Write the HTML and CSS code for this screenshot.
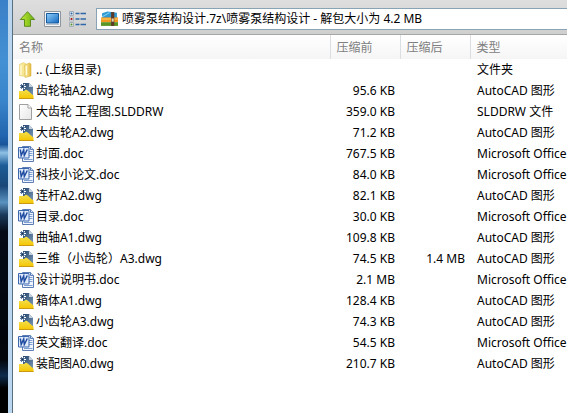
FILE: index.html
```html
<!DOCTYPE html>
<html lang="zh-Hans">
<head>
  <meta charset="UTF-8">
  <title>喷雾泵结构设计.7z</title>
  <link rel="stylesheet" href="styles.css">
</head>
<body>
  <svg class="sprites" aria-hidden="true">
    <defs>
      <linearGradient id="gFolder"><stop offset="0" stop-color="#fdf3b0"/><stop offset="1" stop-color="#e3b93c"/></linearGradient>
      <linearGradient id="gYellow" x2="0" y2="1"><stop offset="0" stop-color="#f2e04c"/><stop offset="1" stop-color="#f6c400"/></linearGradient>
      <linearGradient id="gNavy" x2="1" y2="1"><stop offset="0" stop-color="#24466e"/><stop offset="1" stop-color="#7f9cb8"/></linearGradient>
      <linearGradient id="gPage" x2="1" y2="1"><stop offset="0" stop-color="#fff"/><stop offset="1" stop-color="#e6e6e6"/></linearGradient>
      <linearGradient id="gGreen"><stop offset="0" stop-color="#c4e838"/><stop offset="1" stop-color="#66b010"/></linearGradient>
      <linearGradient id="gScreen" x2="1" y2="1"><stop offset="0" stop-color="#8fd0fa"/><stop offset="1" stop-color="#1467c0"/></linearGradient>
    </defs>
    <symbol id="folder" viewBox="0 0 16 16">
      <path d="M1.500 2.500l4-2 2 1v13l-6-1z" fill="#f7e793" stroke="#e2cd6a" stroke-width=".6"/>
      <path d="M6.500 3l5-2 1.500 1v12l-6 1.500z" fill="url(#gFolder)" stroke="#d9b445" stroke-width=".6"/>
      <path d="M3 3v10M8.500 4v9" stroke="#fffbe0" stroke-width="1.200"/>
    </symbol>
    <symbol id="dwg" viewBox="0 0 16 16">
      <path d="M5 0h6l4 4v10H5z" fill="url(#gNavy)"/>
      <path d="M11 0l4 4h-4z" fill="#c4d2e0"/>
      <path d="M1 8h5l2-1.500c3 1 4.500 4.500 7.500 6V16H1z" fill="url(#gYellow)"/>
      <path d="M1 15.500h14.500" stroke="#c99a10"/>
      <path d="M2 1h5v5H2z" fill="#5c7ea6"/>
      <path d="M3.500 2.500h2v2h-2z" fill="#16304f"/>
      <path d="M4 0h1v2H4zM4 5h1v2H4zM1 3h2v1H1zM6 3h2v1H6zM2 1h1v1H2zM6 1h1v1H6zM2 5h1v1H2zM6 5h1v1H6z" fill="#fff"/>
    </symbol>
    <symbol id="page" viewBox="0 0 16 16">
      <path d="M1.500 .5h8.500l3.500 3.500v11.500h-12z" fill="url(#gPage)" stroke="#a0a0a0"/>
      <path d="M10 .5v3.500h3.500" fill="#fff" stroke="#a0a0a0"/>
    </symbol>
    <symbol id="doc" viewBox="0 0 16 16">
      <path d="M4.500 .5h8l3 3v12h-11z" fill="#f0f5fd" stroke="#5b7db4"/>
      <path d="M12.500 .5v3h3" fill="#cfdef4" stroke="#5b7db4"/>
      <path d="M11 5.500h3.500M11 7.500h3.500M11 9.500h3.500M6 13.500h8.500" stroke="#7f9fd2"/>
      <path d="M.5 1.500h10.500v10.500H.5z" fill="#dfeafb" stroke="#3e68ae"/>
      <path d="M2.300 3.500l.9 6L5.700 4l.6 5.500L9.300 3.500" fill="none" stroke="#1f4ba0" stroke-width="1.500"/>
    </symbol>
    <symbol id="up" viewBox="0 0 16 16">
      <path d="M8 .7l7.200 7.800H11v6.800H5V8.500H.8z" fill="url(#gGreen)" stroke="#5c8c1c"/>
    </symbol>
    <symbol id="screen" viewBox="0 0 17 16">
      <path d="M.5 .5h16v15H.5z" fill="#f4f4f4" stroke="#8d969f"/>
      <path d="M2.500 2.500h12v9.500h-12z" fill="url(#gScreen)" stroke="#165a9e"/>
      <path d="M2 13.500h13" stroke="#b9c2ca"/>
    </symbol>
    <symbol id="list" viewBox="0 0 17 16">
      <path d="M.5 .5h4v4h-4zM.5 6h4v4h-4zM.5 11.500h4v4h-4z" fill="#fff" stroke="#a2adb8"/>
      <path d="M1.500 1.500h2v2h-2z" fill="#2d66a8"/>
      <path d="M1.500 7h2v2h-2z" fill="#a02020"/>
      <path d="M1.500 12.500h2v2h-2z" fill="#4f8c28"/>
      <path d="M6.500 2.500h4M11.500 2.500h5.500M6.500 8h4M11.500 8h5.500M6.500 13.500h4M11.500 13.500h5.500" stroke="#2f69ac" stroke-width="1.600"/>
    </symbol>
    <symbol id="archive" viewBox="0 0 16 14">
      <path d="M1 1.500L6 0l9 1v6H1z" fill="#2f9ad2"/>
      <path d="M1 5l7-4" stroke="#8fd4f0"/>
      <path d="M0 5.500h16V10H0z" fill="#f19a20"/>
      <path d="M0 7h16" stroke="#ffcb62"/>
      <path d="M0 10h16v3.500H0z" fill="#5a9624"/>
      <path d="M9.500 .5h3v13h-3z" fill="#5b3b28"/>
      <path d="M10 6.500h2v3h-2z" fill="#e4d8b2"/>
    </symbol>
  </svg>

  <div class="desktop"></div>
  <div class="window">
    <div class="toolbar">
      <button type="button" aria-label="向上"><svg><use href="#up"/></svg></button>
      <button type="button" aria-label="查看"><svg><use href="#screen"/></svg></button>
      <button type="button" aria-label="列表"><svg><use href="#list"/></svg></button>
      <label class="address">
        <svg><use href="#archive"/></svg>
        <input type="text" aria-label="路径" value="喷雾泵结构设计.7z\喷雾泵结构设计 - 解包大小为 4.2 MB">
      </label>
    </div>
    <table>
      <colgroup><col class="col-name"><col class="col-size"><col class="col-size"><col></colgroup>
      <thead>
        <tr><th>名称</th><th>压缩前</th><th>压缩后</th><th>类型</th></tr>
      </thead>
      <tbody>
        <tr><td><svg><use href="#folder"/></svg>.. (上级目录)</td><td></td><td></td><td>文件夹</td></tr>
        <tr><td><svg><use href="#dwg"/></svg>齿轮轴A2.dwg</td><td>95.6 KB</td><td></td><td>AutoCAD 图形</td></tr>
        <tr><td><svg><use href="#page"/></svg>大齿轮 工程图.SLDDRW</td><td>359.0 KB</td><td></td><td>SLDDRW 文件</td></tr>
        <tr><td><svg><use href="#dwg"/></svg>大齿轮A2.dwg</td><td>71.2 KB</td><td></td><td>AutoCAD 图形</td></tr>
        <tr><td><svg><use href="#doc"/></svg>封面.doc</td><td>767.5 KB</td><td></td><td>Microsoft Office</td></tr>
        <tr><td><svg><use href="#doc"/></svg>科技小论文.doc</td><td>84.0 KB</td><td></td><td>Microsoft Office</td></tr>
        <tr><td><svg><use href="#dwg"/></svg>连杆A2.dwg</td><td>82.1 KB</td><td></td><td>AutoCAD 图形</td></tr>
        <tr><td><svg><use href="#doc"/></svg>目录.doc</td><td>30.0 KB</td><td></td><td>Microsoft Office</td></tr>
        <tr><td><svg><use href="#dwg"/></svg>曲轴A1.dwg</td><td>109.8 KB</td><td></td><td>AutoCAD 图形</td></tr>
        <tr><td><svg><use href="#dwg"/></svg>三维（小齿轮）A3.dwg</td><td>74.5 KB</td><td>1.4 MB</td><td>AutoCAD 图形</td></tr>
        <tr><td><svg><use href="#doc"/></svg>设计说明书.doc</td><td>2.1 MB</td><td></td><td>Microsoft Office</td></tr>
        <tr><td><svg><use href="#dwg"/></svg>箱体A1.dwg</td><td>128.4 KB</td><td></td><td>AutoCAD 图形</td></tr>
        <tr><td><svg><use href="#dwg"/></svg>小齿轮A3.dwg</td><td>74.3 KB</td><td></td><td>AutoCAD 图形</td></tr>
        <tr><td><svg><use href="#doc"/></svg>英文翻译.doc</td><td>54.5 KB</td><td></td><td>Microsoft Office</td></tr>
        <tr><td><svg><use href="#dwg"/></svg>装配图A0.dwg</td><td>210.7 KB</td><td></td><td>AutoCAD 图形</td></tr>
      </tbody>
    </table>
  </div>
</body>
</html>
```

FILE: styles.css
```css
* {
  box-sizing: border-box;
}
body {
  margin: 0;
  display: flex;
  min-height: 100vh;
  font: 12px/20px "Noto Sans", "Noto Sans CJK SC", sans-serif;
  color: #000;
  overflow: hidden;
}
.sprites {
  position: absolute;
  width: 0;
  height: 0;
}
.desktop {
  flex: 0 0 8px;
  background: linear-gradient(#3a80c8 0%, #4490d4 15%, #3a86cc 24%, #1f64ae 33%, #1a559a 35%, #8fc0e4 37%, #1c5c98 40%, #1a4878 45%, #5a92c0 49%, #1a3a5c 52%, #050c18 56%, #02060c 80%, #03060a 87%, #0e2c4c 91%, #000 94%);
}
.window {
  flex: 1;
  min-width: 0;
  border-left: 4px solid #b9d6ee;
  box-shadow: inset 1px 0 #5c6f80;
  padding-left: 1px;
  background: #fff;
}

/* toolbar */
.toolbar {
  display: flex;
  align-items: center;
  height: 35px;
  padding: 3px 0 0 6px;
  gap: 8px;
  background: linear-gradient(#dedede, #cfcfcf);
  border-bottom: 1px solid #a4a8a4;
}
.toolbar button {
  border: 0;
  padding: 0;
  width: 17px;
  height: 16px;
  background: none;
}
.toolbar svg {
  display: block;
  flex: none;
  width: 17px;
  height: 16px;
}
.address {
  flex: 1;
  display: flex;
  align-items: center;
  gap: 4px;
  height: 22px;
  margin-left: 2px;
  padding-left: 4px;
  border: 1px solid #88a4b4;
  border-right: 0;
  background: #fff;
}
.address input {
  flex: 1;
  min-width: 0;
  border: 0;
  padding: 0;
  font: inherit;
  color: inherit;
  outline: 0;
}

/* file list */
table {
  width: 100%;
  table-layout: fixed;
  border-collapse: collapse;
}
.col-name {
  width: 317px;
}
.col-size {
  width: 70px;
}
th {
  height: 24px;
  padding: 2px 6px 0;
  font-weight: normal;
  text-align: left;
  color: #808080;
  background: linear-gradient(#fff, #f5f5f5);
  border-right: 1px solid #dcdfe2;
}
th:last-child {
  border-right: 0;
}
td {
  height: 21px;
  padding: 0 5px;
  white-space: nowrap;
  overflow: hidden;
}
td:last-child {
  padding: 0 0 0 7px;
}
td svg {
  width: 16px;
  height: 16px;
  margin-right: 2px;
  vertical-align: middle;
}
td:nth-child(2),
td:nth-child(3) {
  text-align: right;
}
```
